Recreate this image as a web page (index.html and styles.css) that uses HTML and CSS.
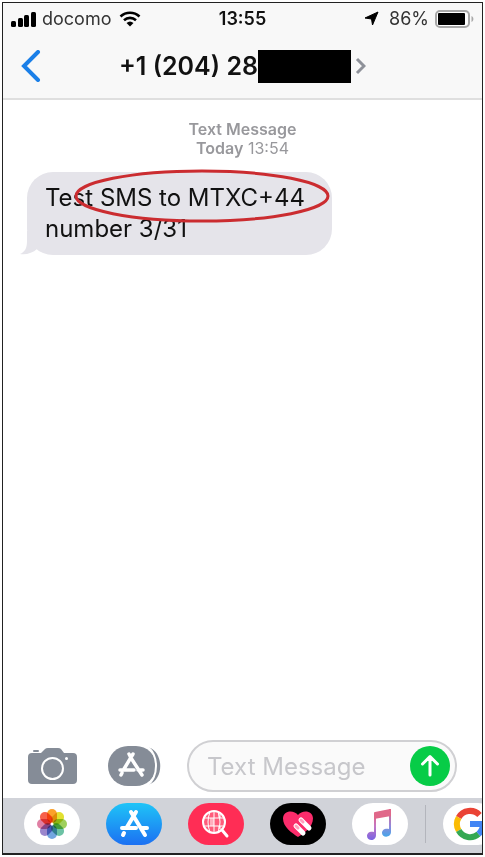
FILE: index.html
```html
<!DOCTYPE html>
<html lang="en">
<head>
    <meta charset="UTF-8">
    <meta name="viewport" content="width=device-width, initial-scale=1.0">
    <title>Messages</title>
    <link rel="stylesheet" href="styles.css">
</head>
<body>
    <div class="phone">
        <header class="top">
            <div class="status">
                <div class="status-left">
                    <svg width="25" height="16" viewBox="0 0 25 16">
                        <rect x="0" y="10" width="5" height="6" rx="1.5"/>
                        <rect x="7" y="7" width="5" height="9" rx="1.5"/>
                        <rect x="13" y="4" width="5" height="12" rx="1.5"/>
                        <rect x="20" y="1" width="5" height="15" rx="1.5"/>
                    </svg>
                    <span>docomo</span>
                    <svg class="wifi" width="22" height="16" viewBox="0 0 22 16">
                        <path d="M1.5 5.5a14 14 0 0 1 19 0M5 9.2a9 9 0 0 1 12 0" fill="none" stroke="#000" stroke-width="2.6"/>
                        <path d="M7.5 12a5.2 5.2 0 0 1 7 0L11 15.5z"/>
                    </svg>
                </div>
                <span class="clock">13:55</span>
                <div class="status-right">
                    <svg width="15" height="15" viewBox="0 0 15 15">
                        <path d="M14 1L8.500 14L7.500 8L1 7z" stroke="#000" stroke-linejoin="round"/>
                    </svg>
                    <span>86%</span>
                    <svg width="39" height="18" viewBox="0 0 39 18">
                        <rect x="1" y="1" width="33" height="16" rx="4" fill="#fff" stroke="#a8a8a8" stroke-width="2"/>
                        <rect x="3" y="3" width="27" height="12" rx="1"/>
                        <path d="M36.500 6c2.500 1 2.500 5 0 6z" fill="#a8a8a8"/>
                    </svg>
                </div>
            </div>
            <div class="nav">
                <button class="back" aria-label="Back">
                    <svg width="20" height="32" viewBox="0 0 20 32">
                        <path d="M17 2L3 16l14 14" fill="none" stroke="#1a7fe8" stroke-width="4" stroke-linecap="round"/>
                    </svg>
                </button>
                <a class="contact" href="#">
                    <span>+1 (204) 28</span>
                    <span class="redacted"></span>
                    <svg width="11" height="18" viewBox="0 0 11 18">
                        <path d="M2 2l7 7l-7 7" fill="none" stroke="#8e9199" stroke-width="3"/>
                    </svg>
                </a>
            </div>
        </header>

        <main class="thread">
            <p class="stamp"><b>Text Message</b><br><b>Today</b> 13:54</p>
            <div class="bubble">
                Test SMS to MTXC+44<br>number 3/31
                <svg class="tail" width="32" height="24" viewBox="0 0 32 24">
                    <path d="M7 0v10c0 7-2 11-7 13c6 1 13-1 17-5l15-2V0z" fill="#e5e4ea"/>
                </svg>
                <svg class="marker" width="256" height="54" viewBox="0 0 256 54">
                    <ellipse cx="128" cy="27" rx="126" ry="25" fill="none" stroke="#cb2c30" stroke-width="3"/>
                </svg>
            </div>
        </main>

        <form class="compose">
            <button type="button" class="camera" aria-label="Camera">
                <svg width="49" height="38" viewBox="0 0 49 38" fill="#858c97">
                    <rect x="5" y="3" width="6" height="2" rx="1"/>
                    <path d="M4 6h9l4-4q1-1 3-1h10q2 0 3 1l3 4h9q4 0 4 4v23q0 4-4 4H4q-4 0-4-4V10q0-4 4-4z"/>
                    <circle cx="24.500" cy="21.500" r="10.500" fill="none" stroke="#fff" stroke-width="2"/>
                    <circle cx="38.500" cy="11.500" r="1.500" fill="#fff"/>
                </svg>
            </button>
            <button type="button" class="apps" aria-label="Apps">
                <svg width="53" height="40" viewBox="0 0 53 40">
                    <path d="M41 1.500c15 5 15 32 0 37c8-9 8-28 0-37z" fill="#858c97"/>
                    <rect x="0" y="0" width="48" height="40" rx="20" fill="#858c97"/>
                    <path d="M39 1c12 6 12 32 0 38" fill="none" stroke="#fff" stroke-width="2"/>
                    <g fill="none" stroke="#fff" stroke-width="3.500" stroke-linecap="round">
                        <path d="M21 8l2 4l11 17M25 8l-9 15M12 24h14M30 24h5M14 27l-1 2"/>
                    </g>
                </svg>
            </button>
            <div class="field">
                <input type="text" placeholder="Text Message" aria-label="Text Message">
                <button class="send" aria-label="Send">
                    <svg width="40" height="40" viewBox="0 0 40 40">
                        <circle cx="20" cy="20" r="20" fill="#07cc47"/>
                        <path d="M20 29V11M12.500 18L20 10.500L27.500 18" fill="none" stroke="#fff" stroke-width="3" stroke-linecap="round" stroke-linejoin="round"/>
                    </svg>
                </button>
            </div>
        </form>

        <nav class="drawer">
            <button class="app" aria-label="Photos">
                <svg width="32" height="32" viewBox="-16 -16 32 32">
                    <g class="petals">
                        <rect x="-5" y="-15" width="10" height="14" rx="5" fill="#fba02a"/>
                        <rect x="-5" y="-15" width="10" height="14" rx="5" fill="#e2e030" transform="rotate(45)"/>
                        <rect x="-5" y="-15" width="10" height="14" rx="5" fill="#9fd05c" transform="rotate(90)"/>
                        <rect x="-5" y="-15" width="10" height="14" rx="5" fill="#6cc2a4" transform="rotate(135)"/>
                        <rect x="-5" y="-15" width="10" height="14" rx="5" fill="#72a6e0" transform="rotate(180)"/>
                        <rect x="-5" y="-15" width="10" height="14" rx="5" fill="#9a86cc" transform="rotate(225)"/>
                        <rect x="-5" y="-15" width="10" height="14" rx="5" fill="#e080a4" transform="rotate(270)"/>
                        <rect x="-5" y="-15" width="10" height="14" rx="5" fill="#f7604a" transform="rotate(315)"/>
                    </g>
                    <circle r="1.500" fill="#fff"/>
                </svg>
            </button>
            <button class="app store" aria-label="App Store">
                <svg width="32" height="30" viewBox="0 0 32 30">
                    <g fill="none" stroke="#fff" stroke-width="4" stroke-linecap="round">
                        <path d="M13 3l14 23M18 3L9 18M4 19h14M24 19h5M6 24l-1 2"/>
                    </g>
                </svg>
            </button>
            <button class="app images" aria-label="Images">
                <svg width="32" height="30" viewBox="0 0 32 30" fill="none" stroke="#fff">
                    <circle cx="14" cy="13" r="11" fill="#ff5c7b" stroke-width="2"/>
                    <path d="M4 9h20M4 17h20M14 2v22M10 3q-4 10 0 20M18 3q4 10 0 20" stroke-width="1"/>
                    <path d="M10 9h4v8h-4zM18 5h3v4h-3zM18 17h3v3h-3z" fill="#fff" fill-opacity=".5" stroke="none"/>
                    <path d="M22 21l5 6" stroke-width="3" stroke-linecap="round"/>
                </svg>
            </button>
            <button class="app touch" aria-label="Digital Touch">
                <svg width="32" height="30" viewBox="0 0 32 30">
                    <path d="M16 28C10 24 1 18 1 9.500C1 1 12 .5 16 6C20 .5 31 1 31 9.500C31 18 22 24 16 28z" fill="#fb2c6b"/>
                    <path d="M19 11l8 8M14 17l7 7" stroke="#fff" stroke-width="5" stroke-linecap="round"/>
                    <path d="M19 11l2 2M14 17l2 2" stroke="#ff9fbd" stroke-width="3" stroke-linecap="round"/>
                </svg>
            </button>
            <button class="app" aria-label="Music">
                <svg width="30" height="34" viewBox="0 0 30 34">
                    <defs>
                        <linearGradient id="left" x1="0" y1="0" x2="0" y2="1">
                            <stop offset="0" stop-color="#e8637f"/>
                            <stop offset=".5" stop-color="#c276c5"/>
                            <stop offset="1" stop-color="#7964e2"/>
                        </linearGradient>
                        <linearGradient id="right" x1="0" y1="0" x2="0" y2="1">
                            <stop offset="0" stop-color="#e8637f"/>
                            <stop offset=".6" stop-color="#9587d9"/>
                            <stop offset="1" stop-color="#45a6ea"/>
                        </linearGradient>
                    </defs>
                    <path d="M9 6h2v22c0 7-9 6-9 1c0-4 4-5 7-4z" fill="url(#left)"/>
                    <path d="M24 2h2v23c0 6-9 6-9 1c0-4 4-5 7-4z" fill="url(#right)"/>
                    <path d="M9 6q0-1 1-1l15-3q1 0 1 1v6l-17 3z" fill="#e0688a"/>
                </svg>
            </button>
            <span class="divider"></span>
            <button class="app google" aria-label="Google">
                <svg width="34" height="34" viewBox="0 0 34 34" fill="none" stroke-width="6">
                    <path d="M26.500 8A13 13 0 0 0 5.700 10.500" stroke="#ea4335"/>
                    <path d="M5.700 10.500A13 13 0 0 0 5.700 23.500" stroke="#fbbc05"/>
                    <path d="M5.700 23.500A13 13 0 0 0 25.500 27" stroke="#34a853"/>
                    <path d="M25.500 27Q30 23 30 17H17" stroke="#4285f4"/>
                </svg>
            </button>
        </nav>
    </div>
</body>
</html>
```
FILE: styles.css
```css
* {
    box-sizing: border-box;
}

body {
    margin: 0;
    padding: 2px;
    font-family: Inter, "Liberation Sans", sans-serif;
    background-color: #fff;
    color: #111;
}

button {
    padding: 0;
    border: none;
    background: none;
    cursor: pointer;
}

svg {
    display: block;
    flex: none;
}

.phone {
    display: flex;
    flex-direction: column;
    min-height: calc(100vh - 4px);
    border: 1px solid #222;
    border-bottom-width: 2px;
    overflow: hidden;
}

.top {
    background-color: #f8f8f8;
    border-bottom: 2px solid #dfdfdf;
}

.status {
    display: grid;
    grid-template-columns: 1fr auto 1fr;
    align-items: center;
    height: 31px;
    padding: 0 8px;
    font-size: 18px;
}

.status-left, .status-right {
    display: flex;
    align-items: center;
    gap: 6px;
    color: #333;
}

.status-right {
    justify-content: flex-end;
}

.status-right span {
    padding-left: 4px;
}

.wifi {
    margin-left: 2px;
}

.clock {
    font-weight: 600;
}

.nav {
    display: grid;
    grid-template-columns: 1fr auto 1fr;
    align-items: center;
    height: 64px;
    padding: 0 18px;
}

.contact {
    display: flex;
    align-items: center;
    color: #111;
    font-size: 25px;
    font-weight: 600;
    text-decoration: none;
}

.redacted {
    width: 93px;
    height: 33px;
    margin-right: 4px;
    background-color: #000;
}

.thread {
    flex: 1;
    padding: 20px 24px;
}

.stamp {
    margin: 0 0 14px;
    color: #98989c;
    font-size: 16px;
    line-height: 19px;
    text-align: center;
}

.stamp b {
    font-weight: 600;
}

.bubble {
    position: relative;
    z-index: 0;
    width: fit-content;
    padding: 10px 27px 11px 18px;
    border-radius: 26px;
    background-color: #e5e4ea;
    font-size: 24px;
    line-height: 31px;
}

.tail {
    position: absolute;
    z-index: -1;
    left: -7px;
    bottom: 0;
}

.marker {
    position: absolute;
    right: 2px;
    top: -3px;
}

.compose {
    display: flex;
    align-items: center;
    padding: 0 25px 6px;
}

.apps {
    margin: 0 26px 0 31px;
}

.field {
    display: flex;
    flex: 1;
    align-items: center;
    min-width: 0;
    height: 52px;
    padding: 0 5px 0 18px;
    border: 2px solid #d0d0d3;
    border-radius: 26px;
    background-color: #fafafa;
}

.field input {
    flex: 1;
    min-width: 0;
    padding: 0;
    border: none;
    outline: none;
    background: none;
    font-family: inherit;
    font-size: 24px;
}

.field input::placeholder {
    color: #c7c7cb;
}

.drawer {
    display: flex;
    align-items: flex-start;
    gap: 26px;
    padding: 5px 0 8px 21px;
    background-color: #d1d3d9;
}

.app {
    display: flex;
    flex: none;
    align-items: center;
    justify-content: center;
    width: 56px;
    height: 42px;
    border-radius: 21px;
    background-color: #fff;
}

.petals rect {
    mix-blend-mode: multiply;
}

.store {
    background: linear-gradient(#1fc4f7, #1c70f2);
}

.images {
    background-color: #ff2d55;
}

.touch {
    background-color: #000;
}

.divider {
    flex: none;
    align-self: center;
    width: 1px;
    height: 38px;
    margin: 0 -9px;
    background-color: #b3b5bc;
}

.google {
    justify-content: flex-start;
    padding-left: 10px;
}
```
